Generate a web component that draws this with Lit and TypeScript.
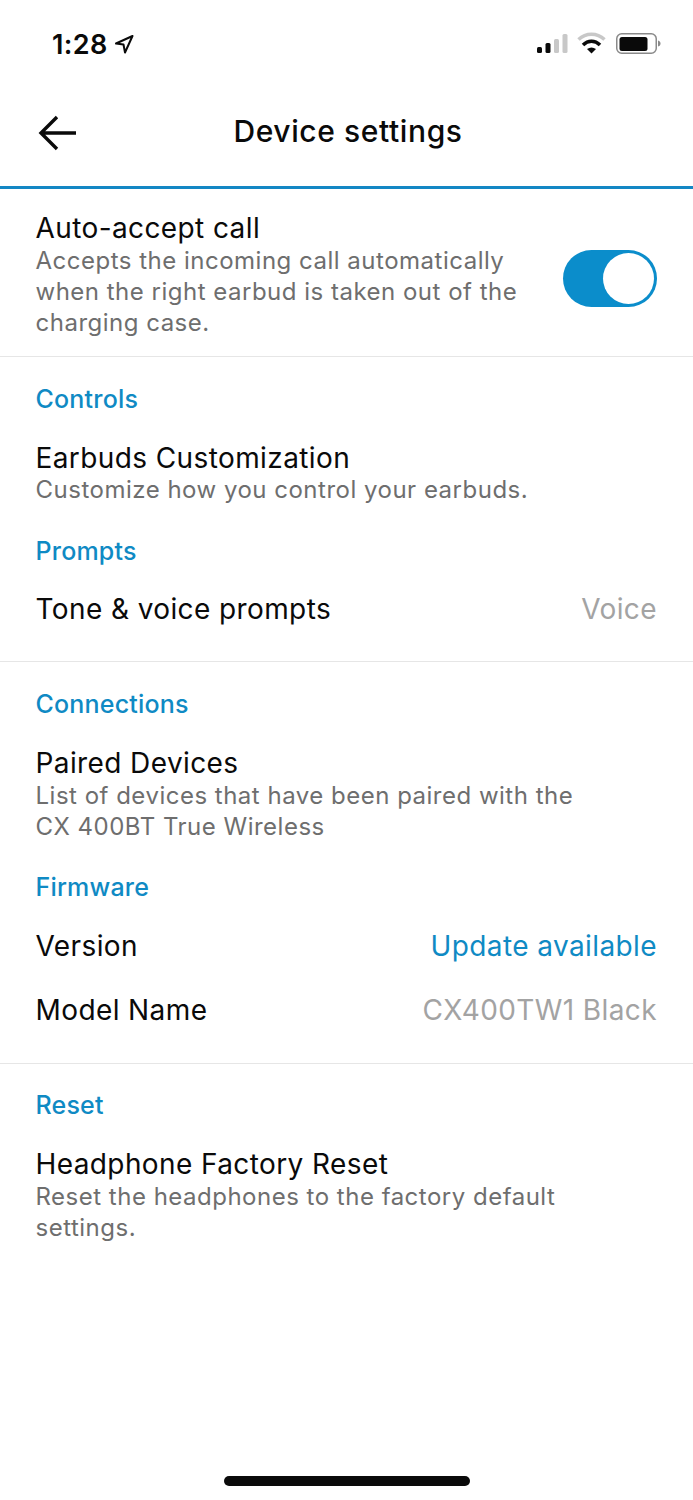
import { LitElement, html, css } from 'lit';
import { customElement } from 'lit/decorators.js';

@customElement('app-root')
export class AppRoot extends LitElement {
  static override styles = css`
    :host {
      display: block;
      width: 693px;
      height: 1500px;
      background: #fff;
      font-family: Inter, "Noto Sans", sans-serif;
      color: #0a0a0a;
      overflow: hidden;
      position: relative;
    }

    .status {
      height: 88px;
      box-sizing: border-box;
      padding: 28px 32px 0 52px;
      display: flex;
      justify-content: space-between;
      align-items: flex-start;
    }

    .time {
      display: flex;
      align-items: center;
      gap: 6px;
      font-size: 27px;
      line-height: 34px;
      font-weight: 600;
      letter-spacing: 0.4px;
    }

    .time svg { margin-top: -3px; }

    .indicators {
      display: flex;
      align-items: center;
      gap: 8px;
      padding-top: 4px;
    }

    .indicators .battery { margin-left: 1px; }

    .nav {
      height: 101px;
      box-sizing: border-box;
      border-bottom: 3px solid #1387c4;
      display: grid;
      grid-template-columns: 1fr auto 1fr;
      align-items: center;
      padding: 0 33px 12px 36px;
    }

    .nav svg { display: block; margin-top: 4px; }

    .nav h1 {
      margin: 0;
      font-size: 30px;
      line-height: 36px;
      font-weight: 500;
      letter-spacing: 0.6px;
    }

    .section {
      padding: 27px 36px 0 35.5px;
      border-bottom: 1px solid #e6e6e6;
    }

    .section.first { padding-top: 23px; padding-bottom: 18px; }
    .section.first .sub { margin-top: 1px; }
    .section.last { padding-top: 26px; border-bottom: 0; }
    .section.controls { padding-bottom: 36px; }
    .section.links { padding-bottom: 37px; }
    .section.links .sub, .section.last .sub { margin-top: 1px; }
    .section.links .label.next { margin-top: 30px; }
    .section.links .row { margin-top: 27px; }
    .section.links .row + .row { margin-top: 32px; }

    .label {
      font-size: 25px;
      line-height: 31px;
      font-weight: 500;
      color: #0f8ac4;
      letter-spacing: 0.2px;
    }

    .label.next { margin-top: 31px; }

    .title {
      font-size: 28px;
      line-height: 32px;
      letter-spacing: 0.4px;
    }

    .sub {
      font-size: 24px;
      line-height: 31px;
      color: #6e6e6e;
      letter-spacing: 0.5px;
    }

    .item { margin-top: 27px; }

    .row {
      display: flex;
      justify-content: space-between;
      align-items: center;
      margin-top: 26px;
    }

    .value { color: #a3a3a3; font-size: 28px; line-height: 32px; letter-spacing: 0.4px; }
    .value.link { color: #0f8ac4; }

    .toggle-row {
      display: flex;
      justify-content: space-between;
      align-items: center;
    }

    .toggle {
      width: 94px;
      height: 57px;
      border-radius: 29px;
      background: #0b8dcb;
      display: flex;
      justify-content: flex-end;
      align-items: center;
      padding-right: 3px;
      box-sizing: border-box;
      margin-top: 6px;
    }

    .knob {
      width: 51px;
      height: 51px;
      border-radius: 50%;
      background: #fff;
    }

    .home {
      position: absolute;
      left: 224px;
      top: 1476px;
      width: 246px;
      height: 10px;
      border-radius: 5px;
      background: #0a0a0a;
    }
  `;

  override render() {
    return html`
      <div class="status">
        <div class="time">
          1:28
          <svg width="20" height="20" viewBox="0 0 20 20" fill="none" stroke="#0a0a0a" stroke-width="2" stroke-linejoin="round">
            <path d="M18.500 2 2 9.500 9.500 10.500 11 18.500Z"/>
          </svg>
        </div>
        <div class="indicators">
          <svg width="32" height="22" viewBox="0 0 32 22">
            <rect x="0" y="15" width="5" height="6" rx="1.500" fill="#0a0a0a"/>
            <rect x="8.500" y="11" width="5" height="10" rx="1.500" fill="#0a0a0a"/>
            <rect x="17" y="7" width="5" height="14" rx="1.500" fill="#c8c8c8"/>
            <rect x="25.500" y="2" width="5" height="19" rx="1.500" fill="#c8c8c8"/>
          </svg>
          <svg width="30" height="22" viewBox="0 0 30 22" fill="none">
            <path d="M1.500 7.500C9 .5 20 .5 27.500 7.500" stroke="#c8c8c8" stroke-width="3.500"/>
            <path d="M6 13C11 8 18 8 23 13" stroke="#0a0a0a" stroke-width="3.500"/>
            <path d="M10 17 14.500 21.500 19 17C16 15 13 15 10 17Z" fill="#0a0a0a"/>
          </svg>
          <svg class="battery" width="45" height="22" viewBox="0 0 45 22">
            <rect x=".75" y="1.750" width="39.500" height="19.500" rx="5" fill="none" stroke="#8a8a8a" stroke-width="1.500"/>
            <rect x="3.500" y="5" width="28" height="14" rx="2.500" fill="#0a0a0a"/>
            <path d="M42 8.500c1.800.5 2.500 1.500 2.500 3s-.7 2.500-2.500 3Z" fill="#8a8a8a"/>
          </svg>
        </div>
      </div>

      <div class="nav">
        <svg width="42" height="36" viewBox="0 0 42 36" fill="none" stroke="#0a0a0a" stroke-width="3.400">
          <path d="M40 18H5M21 2 5 18 21 34"/>
        </svg>
        <h1>Device settings</h1>
      </div>

      <div class="section first">
        <div class="toggle-row">
          <div>
            <div class="title">Auto-accept call</div>
            <div class="sub">Accepts the incoming call automatically<br>when the right earbud is taken out of the<br>charging case.</div>
          </div>
          <div class="toggle"><div class="knob"></div></div>
        </div>
      </div>

      <div class="section controls">
        <div class="label">Controls</div>
        <div class="item">
          <div class="title">Earbuds Customization</div>
          <div class="sub">Customize how you control your earbuds.</div>
        </div>
        <div class="label next">Prompts</div>
        <div class="row">
          <div class="title">Tone &amp; voice prompts</div>
          <div class="value">Voice</div>
        </div>
      </div>

      <div class="section links">
        <div class="label">Connections</div>
        <div class="item">
          <div class="title">Paired Devices</div>
          <div class="sub">List of devices that have been paired with the<br>CX 400BT True Wireless</div>
        </div>
        <div class="label next">Firmware</div>
        <div class="row">
          <div class="title">Version</div>
          <div class="value link">Update available</div>
        </div>
        <div class="row">
          <div class="title">Model Name</div>
          <div class="value">CX400TW1 Black</div>
        </div>
      </div>

      <div class="section last">
        <div class="label">Reset</div>
        <div class="item">
          <div class="title">Headphone Factory Reset</div>
          <div class="sub">Reset the headphones to the factory default<br>settings.</div>
        </div>
      </div>

      <div class="home"></div>
    `;
  }
}
